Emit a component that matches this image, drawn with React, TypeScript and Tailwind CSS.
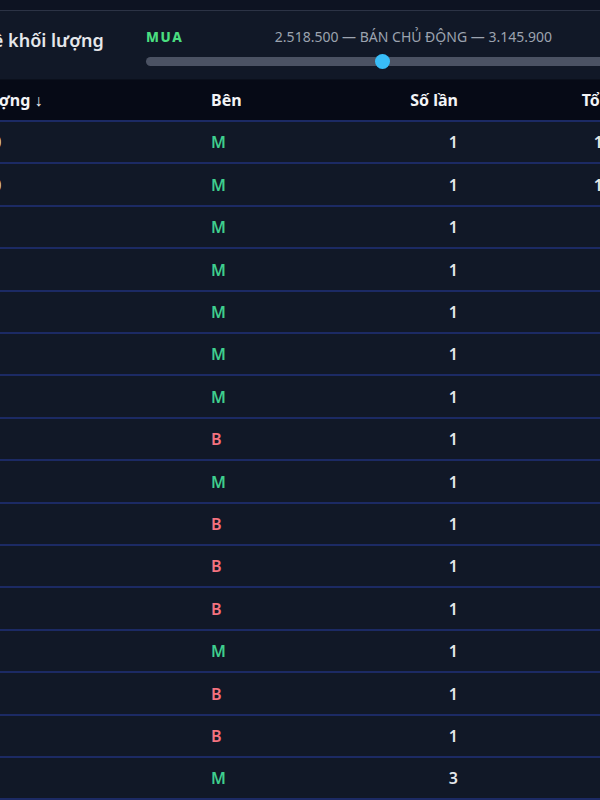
import React from 'react';

interface Trade {
  volume: string;
  side: 'M' | 'B';
  count: number;
  total: string;
}

const trades: Trade[] = [
  { volume: '100.000', side: 'M', count: 1, total: '14.500' },
  { volume: '100.000', side: 'M', count: 1, total: '12.500' },
  { volume: '9.800', side: 'M', count: 1, total: '9.800' },
  { volume: '9.500', side: 'M', count: 1, total: '950' },
  { volume: '9.000', side: 'M', count: 1, total: '900' },
  { volume: '8.000', side: 'M', count: 1, total: '800' },
  { volume: '7.500', side: 'M', count: 1, total: '7.500' },
  { volume: '7.000', side: 'B', count: 1, total: '7.000' },
  { volume: '6.500', side: 'M', count: 1, total: '6.500' },
  { volume: '6.000', side: 'B', count: 1, total: '600' },
  { volume: '5.500', side: 'B', count: 1, total: '5.500' },
  { volume: '5.000', side: 'B', count: 1, total: '5.000' },
  { volume: '4.800', side: 'M', count: 1, total: '4.800' },
  { volume: '4.500', side: 'B', count: 1, total: '4.500' },
  { volume: '4.000', side: 'B', count: 1, total: '4.000' },
  { volume: '3.300', side: 'M', count: 3, total: '9.900' },
];

const buy = 2518500;
const sell = 3145900;

const App: React.FC = () => {
  const pct = (buy / (buy + sell)) * 100;

  return (
    <div
      className="w-[600px] h-[800px] overflow-hidden bg-[#111827] text-gray-100"
      style={{ fontFamily: '"Noto Sans", "Open Sans", sans-serif' }}
    >
      <div className="h-[10px] bg-[#0d1322]" />
      <div className="h-[70px] border-t border-[#2c3345] border-b border-b-[#0b101c] bg-[#111827] flex items-start">
        <h2 className="ml-[-78px] w-[224px] shrink-0 mt-[17px] text-[18px] leading-[24px] font-semibold text-[#e5e7eb] whitespace-nowrap">
          Thống kê khối lượng
        </h2>
        <div className="w-[532px] shrink-0 mt-[18px] flex flex-col gap-[12px]">
          <div className="flex items-center justify-between leading-4">
            <span className="font-extrabold tracking-[0.12em] text-[#4ade80] text-[13.5px]">MUA</span>
            <span className="text-[#9ca3af] text-[14px]">
              {buy.toLocaleString('de-DE')} — BÁN CHỦ ĐỘNG — {sell.toLocaleString('de-DE')}
            </span>
            <span className="font-extrabold tracking-[0.12em] text-[#fb7185] text-[13.5px]">BÁN</span>
          </div>
          <div className="relative h-[9px] rounded-full bg-[#4b5263]">
            <div
              className="absolute top-1/2 w-[15px] h-[15px] -mt-[7.5px] -ml-[7.5px] rounded-full bg-[#38bdf8]"
              style={{ left: `${pct}%` }}
            />
          </div>
        </div>
      </div>

      <div className="ml-[-80px] w-[800px]">
        <div className="h-[42px] flex items-center bg-[#060a16] border-b-2 border-[#1c2a64] text-[16px] font-bold text-[#f3f4f6]">
          <div className="w-[291px] pl-[22px] whitespace-nowrap">Khối lượng ↓</div>
          <div className="w-[120px]">Bên</div>
          <div className="w-[127px] text-right">Số lần</div>
          <div className="w-[186px] text-right whitespace-nowrap">Tổng KL</div>
        </div>
        {trades.map((t, i) => (
          <div
            key={i}
            className={`${i % 5 === 1 || i % 5 === 3 ? 'h-[43px]' : 'h-[42px]'} flex items-center border-b-2 border-[#1c2a64] text-[16px] font-semibold`}
          >
            <div className="w-[291px] pl-[22px] text-[#d1d5db]">{t.volume}</div>
            <div className={`w-[120px] ${t.side === 'M' ? 'text-[#3fcf8e]' : 'text-[#f4727f]'}`}>{t.side}</div>
            <div className="w-[127px] text-right text-[#e5e7eb]">{t.count}</div>
            <div className="w-[186px] text-right text-[#e5e7eb]">{t.total}</div>
          </div>
        ))}
      </div>
    </div>
  );
};

export default App;
